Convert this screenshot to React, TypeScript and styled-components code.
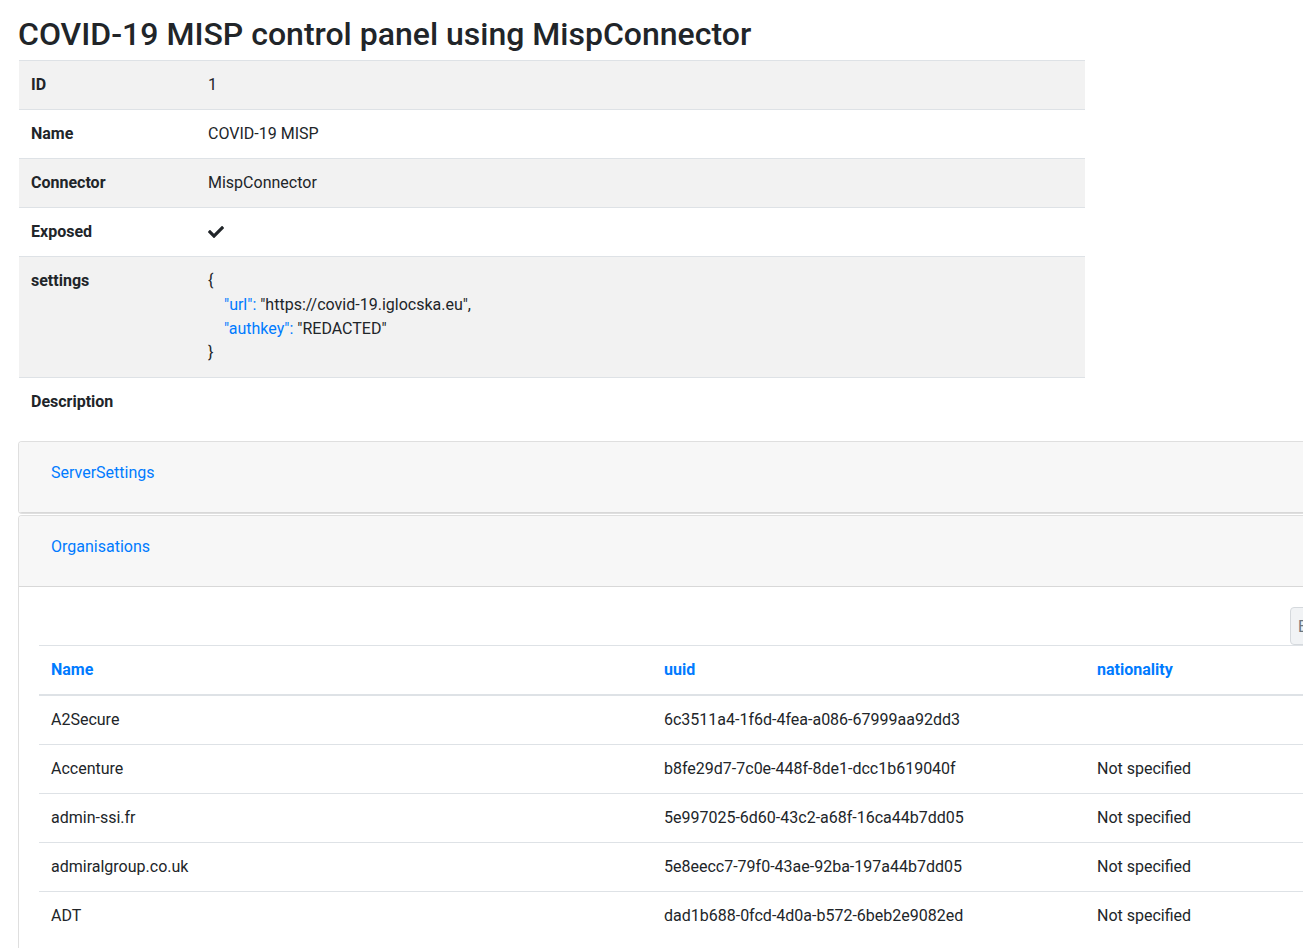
import React from "react";
import styled, { createGlobalStyle } from "styled-components";

const GlobalStyle = createGlobalStyle`
  html, body {
    margin: 0;
    padding: 0;
    overflow: hidden;
    background: #fff;
  }
  body {
    font-family: Roboto, "Liberation Sans", Arial, sans-serif;
    font-size: 16px;
    line-height: 1.5;
    color: #212529;
  }
  * { box-sizing: border-box; }
`;

const Page = styled.div`
  width: 1400px;
  padding: 0 0 0 18px;
`;

const Title = styled.h2`
  margin: 15px 0 7px 0;
  font-size: 32px;
  line-height: 38px;
  font-weight: 500;
  color: #212529;
`;

const DetailTable = styled.table`
  width: 1066px;
  margin: 0 0 15px 1px;
  border-collapse: collapse;
  table-layout: fixed;
`;

const DetailRow = styled.tr<{ $striped: boolean }>`
  background: ${(p) => (p.$striped ? "#f2f2f2" : "transparent")};
`;

const DetailLabel = styled.th`
  width: 177px;
  padding: 12px;
  text-align: left;
  vertical-align: top;
  font-weight: 700;
  line-height: 24px;
  border-top: 1px solid #dee2e6;
`;

const DetailValue = styled.td`
  padding: 12px;
  vertical-align: top;
  line-height: 24px;
  border-top: 1px solid #dee2e6;
`;

const JsonLine = styled.div<{ $indent?: boolean }>`
  padding-left: ${(p) => (p.$indent ? "16px" : "0")};
  white-space: pre;
`;

const JsonKey = styled.span`
  color: #007bff;
`;

const CheckIcon = styled.svg`
  width: 16px;
  height: 24px;
  display: block;
  fill: #212529;
`;

const Accordion = styled.div`
  width: 1373px;
  display: flex;
  flex-direction: column;
  gap: 1px;
`;

const Card = styled.div`
  border: 1px solid rgba(0, 0, 0, 0.125);
  border-radius: 4px;
  background: #fff;
  overflow: hidden;
`;

const CardHeader = styled.div`
  background: #f7f7f7;
  padding: 12px 20px;
  border-bottom: 1px solid rgba(0, 0, 0, 0.125);
`;

const HeaderTitle = styled.h2`
  margin: 0 0 8px 0;
  font-size: 16px;
  line-height: 1;
`;

const LinkButton = styled.button`
  background: transparent;
  border: 1px solid transparent;
  padding: 6px 11px;
  font-family: inherit;
  font-size: 16px;
  line-height: 24px;
  color: #007bff;
  cursor: pointer;
  font-weight: 400;
`;

const CardBody = styled.div`
  padding: 20px;
`;

const Toolbar = styled.div`
  display: flex;
  justify-content: flex-end;
`;

const ToolButton = styled.button`
  min-width: 80px;
  height: 38px;
  padding: 0 7px;
  text-align: left;
  font-family: inherit;
  font-size: 16px;
  color: #6c757d;
  background: #f1f3f5;
  border: 1px solid #d5d9dd;
  border-radius: 4px;
`;

const DataTable = styled.table`
  width: 100%;
  border-collapse: collapse;
  table-layout: fixed;
`;

const HeadCell = styled.th<{ $w?: number }>`
  width: ${(p) => (p.$w ? `${p.$w}px` : "auto")};
  padding: 12px;
  text-align: left;
  font-weight: 700;
  line-height: 24px;
  color: #007bff;
  border-top: 1px solid #dee2e6;
  border-bottom: 2px solid #dee2e6;
`;

const Cell = styled.td`
  padding: 12px;
  line-height: 24px;
  border-top: 1px solid #dee2e6;
  vertical-align: top;
`;

const orgs = [
  { name: "A2Secure", uuid: "6c3511a4-1f6d-4fea-a086-67999aa92dd3", nat: "\u00a0" },
  { name: "Accenture", uuid: "b8fe29d7-7c0e-448f-8de1-dcc1b619040f", nat: "Not specified" },
  { name: "admin-ssi.fr", uuid: "5e997025-6d60-43c2-a68f-16ca44b7dd05", nat: "Not specified" },
  { name: "admiralgroup.co.uk", uuid: "5e8eecc7-79f0-43ae-92ba-197a44b7dd05", nat: "Not specified" },
  { name: "ADT", uuid: "dad1b688-0fcd-4d0a-b572-6beb2e9082ed", nat: "Not specified" },
];

export default function App() {
  return (
    <>
      <GlobalStyle />
      <Page>
        <Title>COVID-19 MISP control panel using MispConnector</Title>
        <DetailTable>
          <tbody>
            <DetailRow $striped>
              <DetailLabel>ID</DetailLabel>
              <DetailValue>1</DetailValue>
            </DetailRow>
            <DetailRow $striped={false}>
              <DetailLabel>Name</DetailLabel>
              <DetailValue>COVID-19 MISP</DetailValue>
            </DetailRow>
            <DetailRow $striped>
              <DetailLabel>Connector</DetailLabel>
              <DetailValue>MispConnector</DetailValue>
            </DetailRow>
            <DetailRow $striped={false}>
              <DetailLabel>Exposed</DetailLabel>
              <DetailValue>
                <CheckIcon viewBox="0 -128 512 768">
                  <path d="M173.898 439.404l-166.4-166.4c-9.997-9.997-9.997-26.206 0-36.204l36.203-36.204c9.997-9.998 26.207-9.998 36.204 0L192 312.69 432.095 72.596c9.997-9.997 26.207-9.997 36.204 0l36.203 36.204c9.997 9.997 9.997 26.206 0 36.204l-294.4 294.401c-9.998 9.997-26.207 9.997-36.204-.001z" />
                </CheckIcon>
              </DetailValue>
            </DetailRow>
            <DetailRow $striped>
              <DetailLabel>settings</DetailLabel>
              <DetailValue>
                <JsonLine>{"{"}</JsonLine>
                <JsonLine $indent>
                  <JsonKey>"url":</JsonKey> "https://covid-19.iglocska.eu",
                </JsonLine>
                <JsonLine $indent>
                  <JsonKey>"authkey":</JsonKey> "REDACTED"
                </JsonLine>
                <JsonLine>{"}"}</JsonLine>
              </DetailValue>
            </DetailRow>
            <DetailRow $striped={false}>
              <DetailLabel>Description</DetailLabel>
              <DetailValue>{"\u00a0"}</DetailValue>
            </DetailRow>
          </tbody>
        </DetailTable>

        <Accordion>
          <Card>
            <CardHeader>
              <HeaderTitle>
                <LinkButton>ServerSettings</LinkButton>
              </HeaderTitle>
            </CardHeader>
          </Card>
          <Card>
            <CardHeader>
              <HeaderTitle>
                <LinkButton>Organisations</LinkButton>
              </HeaderTitle>
            </CardHeader>
            <CardBody>
              <Toolbar>
                <ToolButton>Export</ToolButton>
              </Toolbar>
              <DataTable>
                <thead>
                  <tr>
                    <HeadCell $w={613}>Name</HeadCell>
                    <HeadCell $w={433}>uuid</HeadCell>
                    <HeadCell>nationality</HeadCell>
                  </tr>
                </thead>
                <tbody>
                  {orgs.map((o) => (
                    <tr key={o.uuid}>
                      <Cell>{o.name}</Cell>
                      <Cell>{o.uuid}</Cell>
                      <Cell>{o.nat}</Cell>
                    </tr>
                  ))}
                </tbody>
              </DataTable>
            </CardBody>
          </Card>
        </Accordion>
      </Page>
    </>
  );
}
